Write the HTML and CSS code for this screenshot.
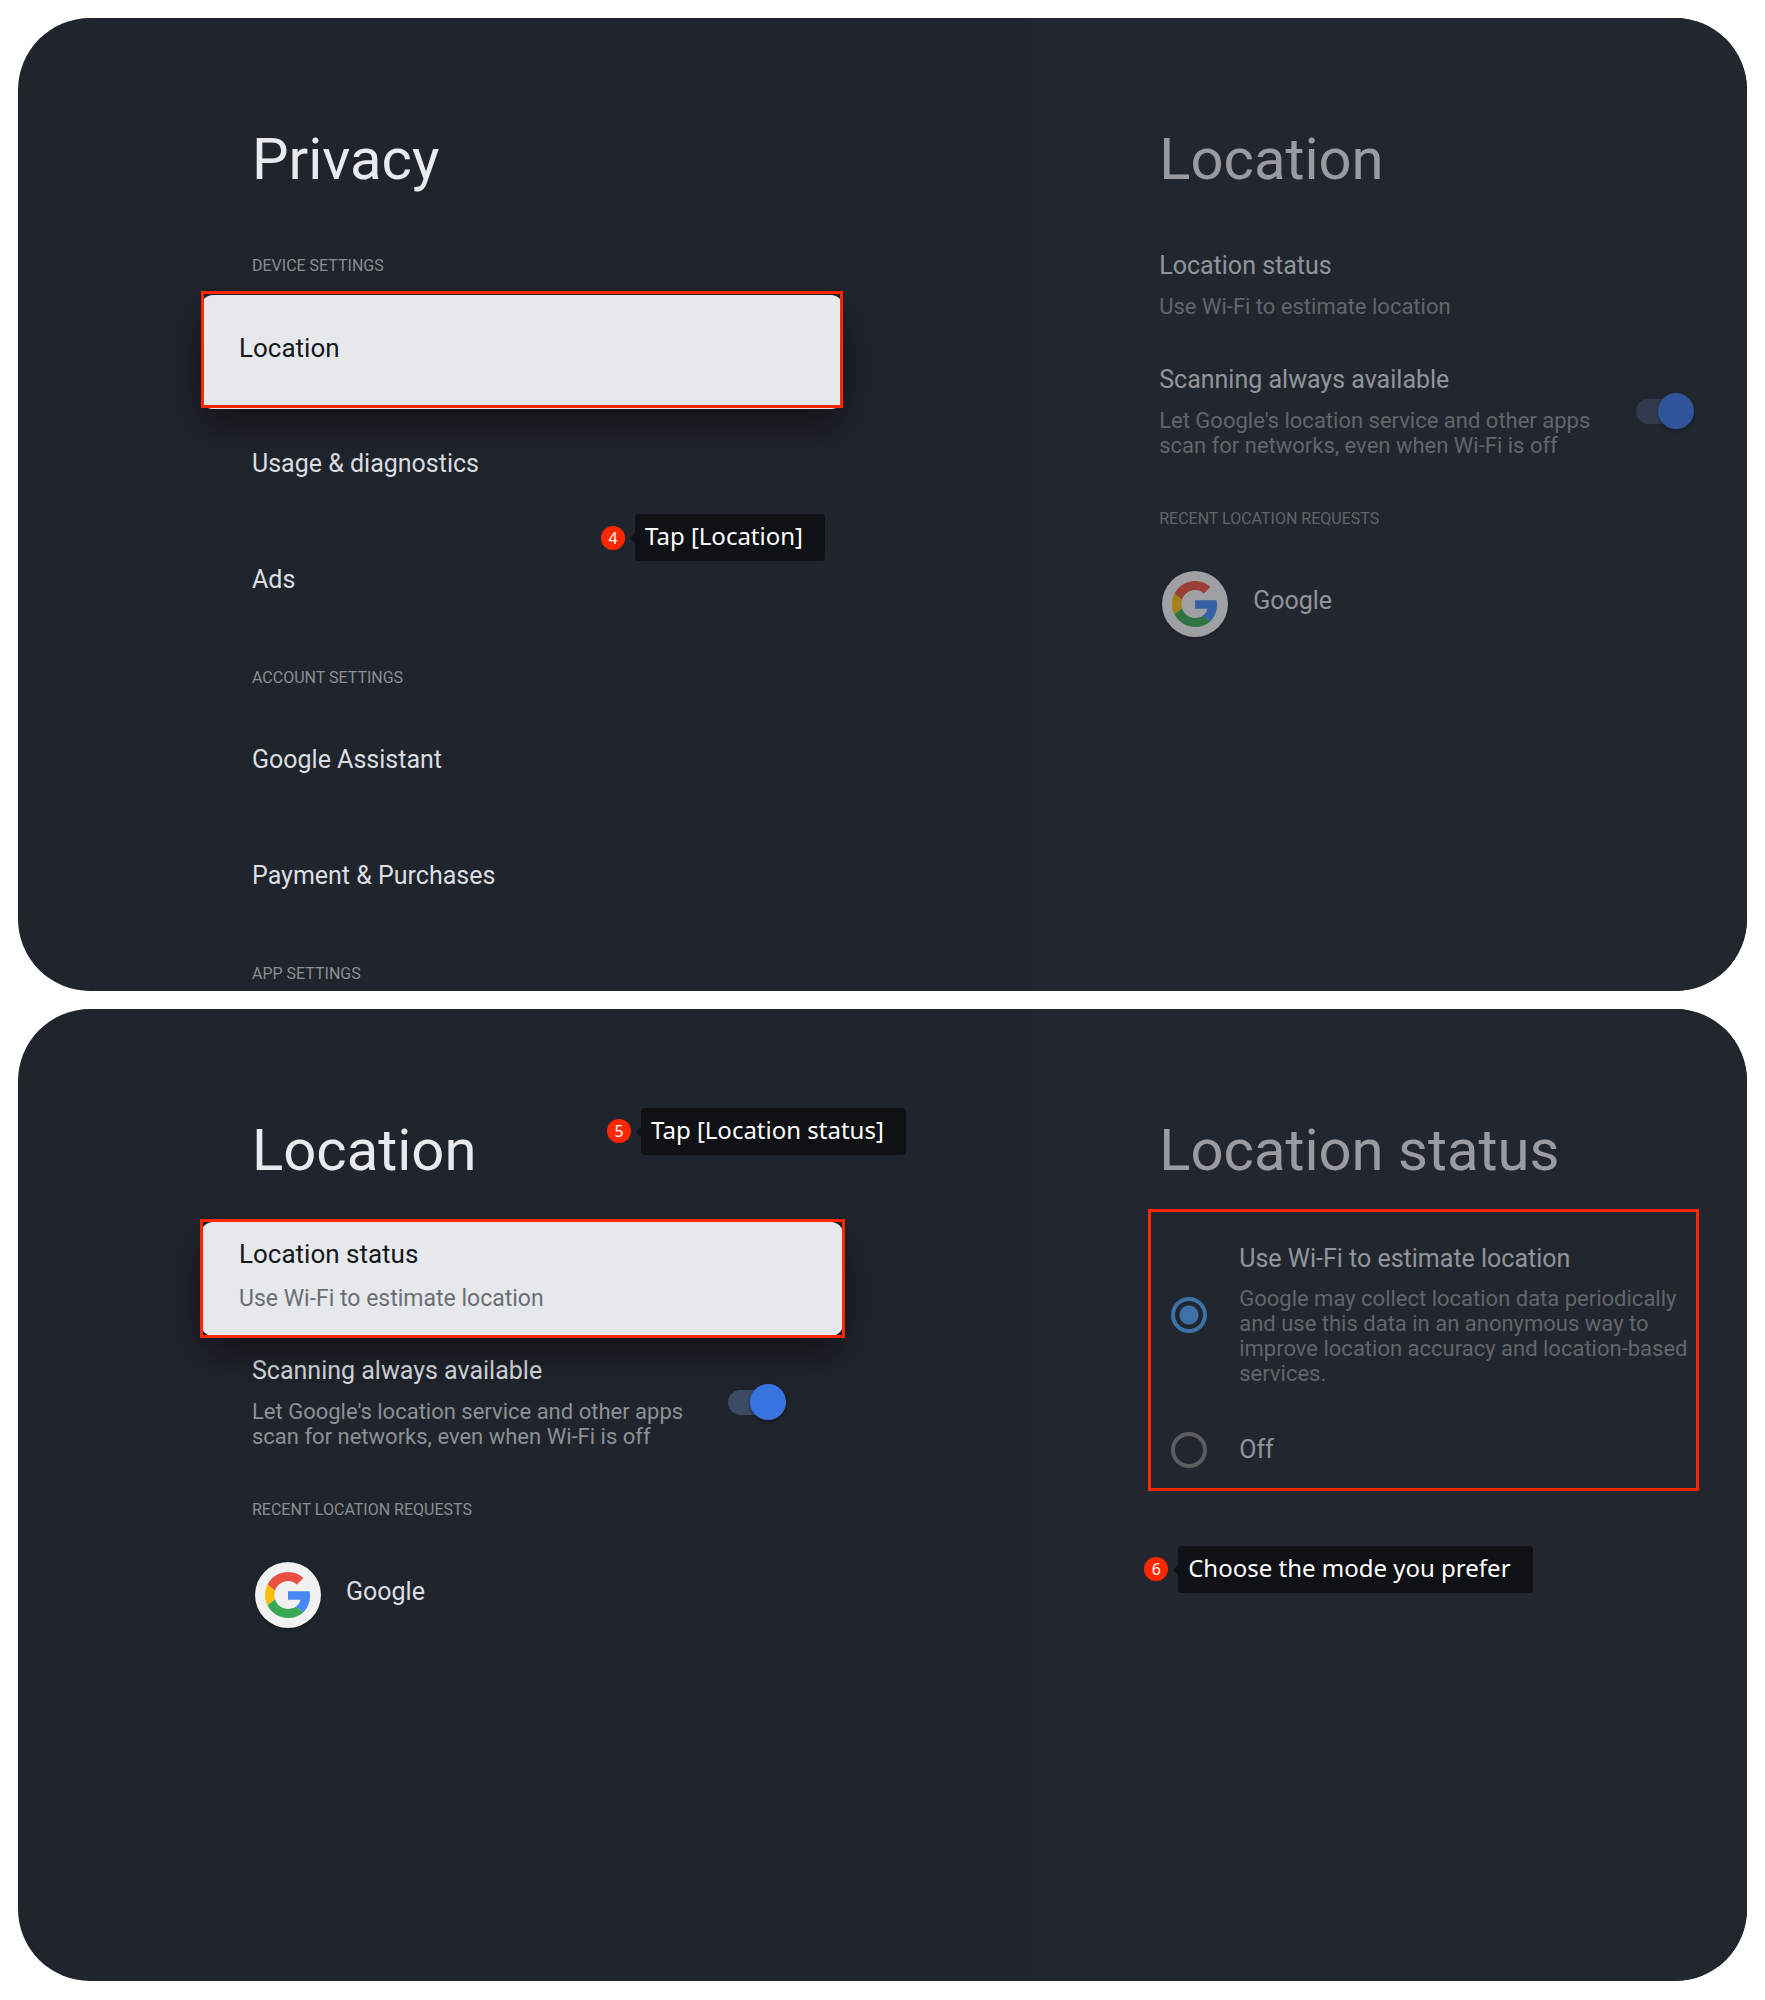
FILE: index.html
```html
<!DOCTYPE html>
<html lang="en">
<head>
	<meta charset="UTF-8">
	<title>Location settings</title>
	<meta name="viewport" content="width=device-width, initial-scale=1.0">
	<link rel="stylesheet" href="styles.css">
</head>
<body>

	<!-- shared Google logo -->
	<svg class="sprite" aria-hidden="true">
		<symbol id="google" viewBox="0 0 48 48">
			<path fill="#ea4e40" d="M24 9.5c3.54 0 6.71 1.22 9.21 3.6l6.85-6.85C35.9 2.38 30.47 0 24 0 14.62 0 6.51 5.38 2.56 13.22l7.98 6.19C12.43 13.72 17.74 9.5 24 9.5z"/>
			<path fill="#4788f4" d="M46.98 24.55c0-1.57-.15-3.09-.38-4.55H24v9.02h12.94c-.58 2.96-2.26 5.48-4.78 7.18l7.73 6c4.51-4.18 7.09-10.36 7.09-17.65z"/>
			<path fill="#fbbe0d" d="M10.53 28.59c-.48-1.45-.76-2.99-.76-4.59s.27-3.14.76-4.59l-7.98-6.19C.92 16.46 0 20.12 0 24c0 3.88.92 7.54 2.56 10.78l7.97-6.19z"/>
			<path fill="#39a855" d="M24 48c6.48 0 11.93-2.13 15.89-5.81l-7.73-6c-2.15 1.45-4.92 2.3-8.16 2.3-6.26 0-11.57-4.22-13.47-9.91l-7.98 6.19C6.51 42.62 14.62 48 24 48z"/>
		</symbol>
	</svg>

	<section class="screen">
		<div class="pane">
			<h1>Privacy</h1>
			<h2>DEVICE SETTINGS</h2>
			<button class="row selected">Location<span class="frame"></span></button>
			<button class="row">Usage &amp; diagnostics</button>
			<button class="row">Ads</button>
			<h2>ACCOUNT SETTINGS</h2>
			<button class="row">Google Assistant</button>
			<button class="row">Payment &amp; Purchases</button>
			<h2>APP SETTINGS</h2>
		</div>
		<div class="pane preview">
			<h1>Location</h1>
			<button class="row detail">
				<span class="text">
					<span class="name">Location status</span>
					<span class="summary">Use Wi-Fi to estimate location</span>
				</span>
			</button>
			<label class="row detail">
				<span class="text">
					<span class="name">Scanning always available</span>
					<span class="summary">Let Google's location service and other apps scan for networks, even when Wi-Fi is off</span>
				</span>
				<input class="toggle" type="checkbox" checked>
			</label>
			<h2>RECENT LOCATION REQUESTS</h2>
			<button class="row app">
				<span class="logo"><svg><use href="#google"/></svg></span>
				<span class="app-name">Google</span>
			</button>
		</div>
		<div class="callout step4">
			<span class="badge">4</span>
			<span class="tip">Tap [Location]</span>
		</div>
	</section>

	<section class="screen">
		<div class="pane">
			<h1>Location</h1>
			<button class="row detail selected">
				<span class="text">
					<span class="name">Location status</span>
					<span class="summary">Use Wi-Fi to estimate location</span>
				</span>
				<span class="frame"></span>
			</button>
			<label class="row detail">
				<span class="text">
					<span class="name">Scanning always available</span>
					<span class="summary">Let Google's location service and other apps scan for networks, even when Wi-Fi is off</span>
				</span>
				<input class="toggle" type="checkbox" checked>
			</label>
			<h2>RECENT LOCATION REQUESTS</h2>
			<button class="row app">
				<span class="logo"><svg><use href="#google"/></svg></span>
				<span class="app-name">Google</span>
			</button>
		</div>
		<div class="pane preview">
			<h1>Location status</h1>
			<fieldset class="modes">
				<label class="mode">
					<input type="radio" name="mode" checked>
					<span class="text">
						<span class="name">Use Wi-Fi to estimate location</span>
						<span class="summary">Google may collect location data periodically and use this data in an anonymous way to improve location accuracy and location-based services.</span>
					</span>
				</label>
				<label class="mode">
					<input type="radio" name="mode">
					<span class="text">
						<span class="name">Off</span>
					</span>
				</label>
			</fieldset>
			<div class="callout step6">
				<span class="badge">6</span>
				<span class="tip">Choose the mode you prefer</span>
			</div>
		</div>
		<div class="callout step5">
			<span class="badge">5</span>
			<span class="tip">Tap [Location status]</span>
		</div>
	</section>

</body>
</html>
```
FILE: styles.css
```css
* {
	box-sizing: border-box;
}
body {
	background: #fff;
	display: flex;
	flex-direction: column;
	font-family: Roboto, "Liberation Sans", sans-serif;
	gap: 18px;
	margin: 0;
	padding: 18px;
}
.sprite {
	height: 0;
	position: absolute;
	width: 0;
}

/* one tv screen, settings on the left and the next page on the right */
.screen {
	aspect-ratio: 16 / 9;
	background: #20242c;
	border-radius: 72px;
	display: flex;
	overflow: hidden;
	position: relative;
}
.pane {
	color: #dcdee2;
	flex: 1;
	padding: 107px 188px 0 183px;
}
.preview {
	background: #22262e;
	flex: 0 0 41.4%;
	padding-left: 77px;
	padding-right: 0;
	position: relative;
}
.preview > h1,
.preview > h2,
.preview > .row,
.preview .mode {
	opacity: .6;
}
h1 {
	color: #e8eaed;
	font-size: 58px;
	font-weight: 400;
	line-height: 68px;
	margin: 0;
	padding: 0 0 36px 51px;
	white-space: nowrap;
}
h2 {
	color: #8b8e94;
	font-size: 16px;
	font-weight: 400;
	height: 64px;
	line-height: 20px;
	margin: 0;
	padding: 27px 0 0 51px;
}
.row {
	align-items: center;
	background: none;
	border: 0;
	color: inherit;
	cursor: pointer;
	display: flex;
	font-family: inherit;
	font-size: 25px;
	gap: 40px;
	line-height: 30px;
	min-height: 116px;
	padding: 0 57px 6px 51px;
	text-align: left;
	width: 100%;
}
.preview .row {
	padding-right: 53px;
}
.text {
	display: flex;
	flex: 1;
	flex-direction: column;
	gap: 13px;
}
.summary {
	color: #8d9096;
	font-size: 22px;
	line-height: 25px;
}
.row.detail {
	padding-bottom: 24px;
	padding-top: 20px;
}
.row.selected {
	background: #e6e8ec;
	border-radius: 12px;
	box-shadow: 0 16px 40px rgba(0,0,0,.5);
	color: #15171a;
	font-size: 26px;
	margin-top: 2px;
	min-height: 114px;
	padding-bottom: 8px;
	padding-left: 38px;
	position: relative;
}
.row.detail.selected {
	padding-bottom: 24px;
	padding-top: 17px;
}
.selected .text {
	gap: 17px;
}
.selected .summary {
	color: #6c6e73;
	font-size: 23px;
}

/* red outlines */
.frame {
	border: 3px solid #ff2600;
	bottom: 1px;
	left: 0;
	position: absolute;
	right: 0;
	top: -4px;
}
.detail .frame {
	bottom: -2px;
	left: -1px;
	right: -2px;
	top: -3px;
}

.toggle {
	appearance: none;
	background: #3d4a64;
	border-radius: 13px;
	height: 25px;
	margin: 0;
	position: relative;
	width: 58px;
}
.toggle::after {
	background: #3874e0;
	border-radius: 50%;
	box-shadow: 0 2px 4px rgba(0,0,0,.4);
	content: "";
	height: 36px;
	position: absolute;
	right: 0;
	top: -6px;
	width: 36px;
}

.row.app {
	gap: 25px;
	padding-bottom: 0;
	padding-left: 54px;
}
.logo {
	align-items: center;
	background: #f1f1f1;
	border-radius: 50%;
	box-shadow: 0 1px 3px rgba(0,0,0,.4);
	display: flex;
	height: 66px;
	justify-content: center;
	width: 66px;
}
.logo svg {
	height: 46px;
	width: 46px;
}
.app-name {
	padding-bottom: 6px;
}

.modes {
	border: 3px solid #ff2600;
	display: flex;
	flex-direction: column;
	gap: 46px;
	margin: -11px 48px 0 40px;
	min-width: 0;
	padding: 32px 0 20px 20px;
}
.mode {
	align-items: center;
	cursor: pointer;
	display: flex;
	font-size: 25px;
	gap: 32px;
	line-height: 30px;
}
.mode .text {
	gap: 12px;
}
.mode input {
	appearance: none;
	border: 4px solid #828284;
	border-radius: 50%;
	flex: none;
	height: 36px;
	margin: 0;
	width: 36px;
}
.mode input:checked {
	background: radial-gradient(circle, #4fa5fa 9px, transparent 10px);
	border-color: #4fa5fa;
}

.callout {
	align-items: center;
	color: #fff;
	display: flex;
	font-family: "Noto Sans", "Open Sans", sans-serif;
	gap: 10px;
	position: absolute;
	white-space: nowrap;
}
.badge {
	background: #ff2600;
	border-radius: 50%;
	font-size: 16px;
	height: 24px;
	line-height: 24px;
	text-align: center;
	width: 24px;
}
.tip {
	background: #101115;
	border-radius: 4px;
	font-size: 24px;
	line-height: 44px;
	padding: 0 22px 3px 10px;
	position: relative;
}
.tip::before {
	border: 5px solid transparent;
	border-left: 0;
	border-right-color: #101115;
	content: "";
	left: -5px;
	position: absolute;
	top: 19px;
}
.step4 {
	left: 583px;
	top: 496px;
}
.step5 {
	left: 589px;
	top: 99px;
}
.step6 {
	left: 113px;
	top: 537px;
}

@media screen and (max-width: 1200px) {
	.screen {
		aspect-ratio: auto;
		flex-direction: column;
	}
	.pane {
		padding: 48px;
	}
}
```
